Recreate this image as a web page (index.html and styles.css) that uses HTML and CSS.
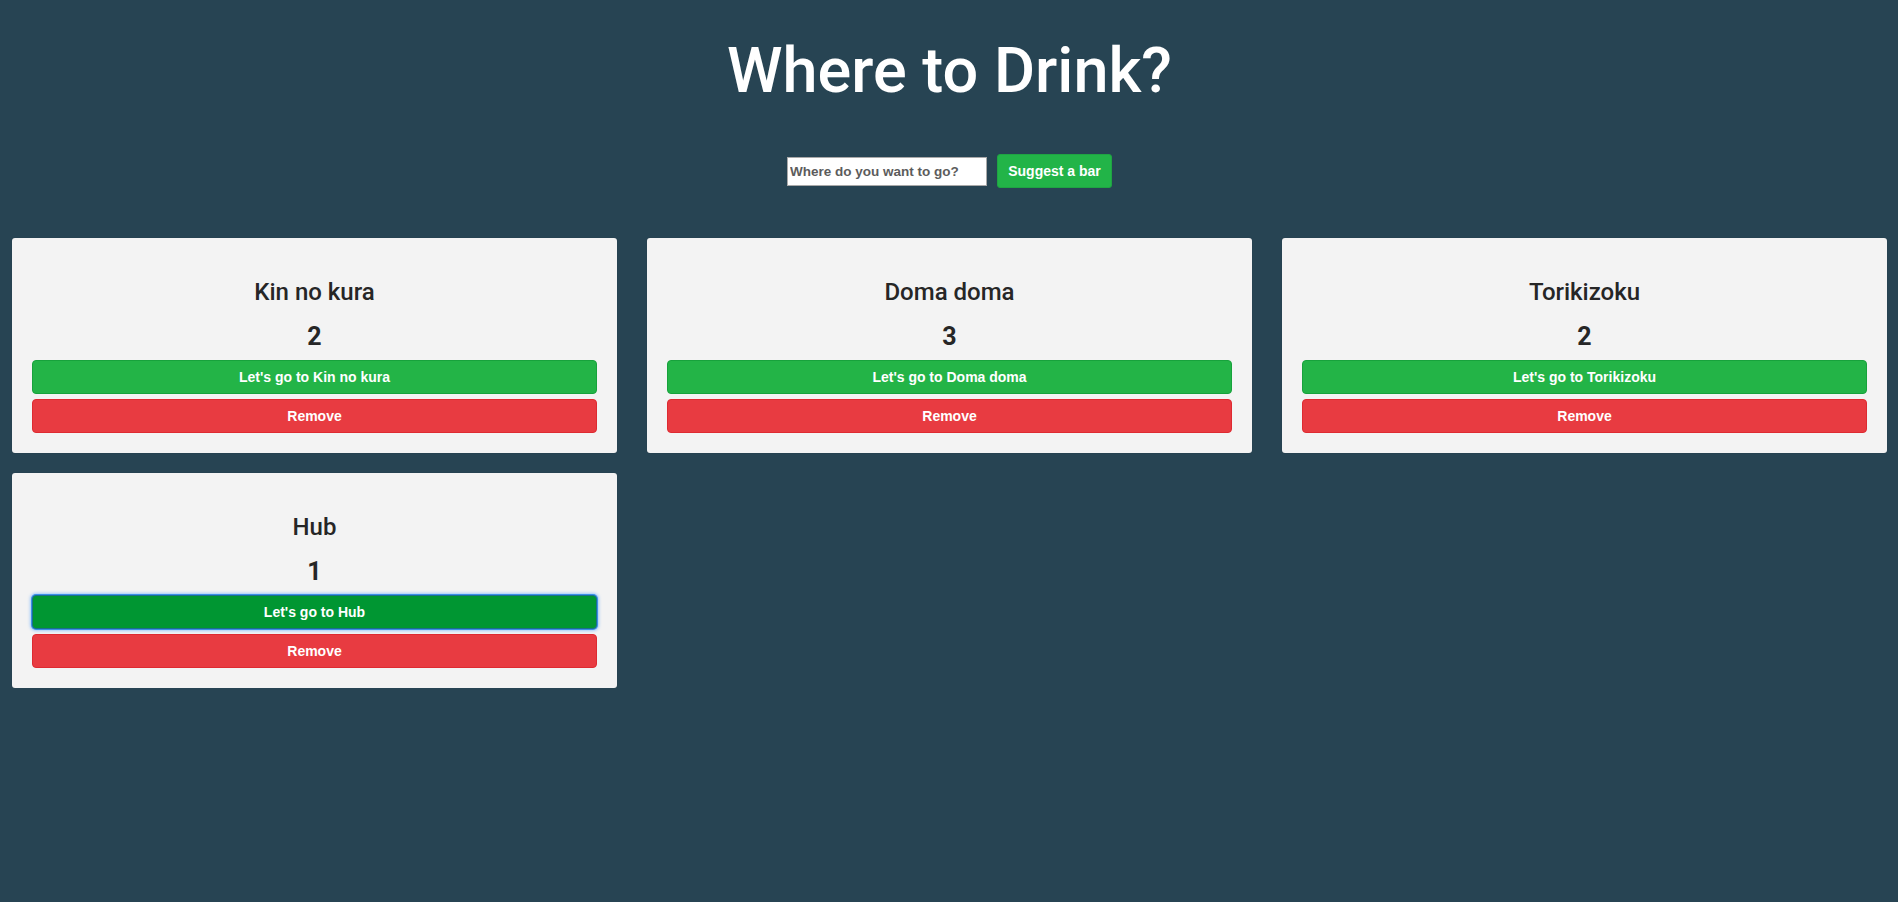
FILE: index.html
```html
<!DOCTYPE html>
<html lang="en">
<head>
<meta charset="utf-8">
<title>Where to Drink?</title>
<link rel="stylesheet" href="styles.css">
</head>
<body>
  <header class="header">
    <h1 class="title">Where to Drink?</h1>
    <form class="suggest">
      <input class="suggest-input" type="text" placeholder="Where do you want to go?">
      <button class="suggest-btn" type="button">Suggest a bar</button>
    </form>
  </header>
  <main class="grid">
    <section class="card">
      <h2 class="card-name">Kin no kura</h2>
      <div class="card-count">2</div>
      <button class="btn btn-go" type="button">Let's go to Kin no kura</button>
      <button class="btn btn-remove" type="button">Remove</button>
    </section>
    <section class="card">
      <h2 class="card-name">Doma doma</h2>
      <div class="card-count">3</div>
      <button class="btn btn-go" type="button">Let's go to Doma doma</button>
      <button class="btn btn-remove" type="button">Remove</button>
    </section>
    <section class="card">
      <h2 class="card-name">Torikizoku</h2>
      <div class="card-count">2</div>
      <button class="btn btn-go" type="button">Let's go to Torikizoku</button>
      <button class="btn btn-remove" type="button">Remove</button>
    </section>
    <section class="card">
      <h2 class="card-name">Hub</h2>
      <div class="card-count">1</div>
      <button class="btn btn-go is-focused" type="button">Let's go to Hub</button>
      <button class="btn btn-remove" type="button">Remove</button>
    </section>
  </main>
</body>
</html>
```
FILE: styles.css
```css
* { box-sizing: border-box; }

html, body {
  margin: 0;
  padding: 0;
  background: #274453;
  min-height: 100%;
}

body {
  padding: 0 11px 0 12px;
  font-family: Roboto, "Liberation Sans", Arial, sans-serif;
  color: #262626;
}

.header {
  display: flex;
  flex-direction: column;
  align-items: center;
}

.title {
  margin: 40px 0 0;
  font-size: 63px;
  line-height: 62px;
  font-weight: 500;
  color: #ffffff;
}

.suggest {
  margin-top: 52px;
  display: flex;
  align-items: center;
  gap: 10px;
  height: 34px;
}

.suggest-input {
  width: 200px;
  height: 29px;
  margin: 1px 0 0;
  padding: 0 2px;
  border: 1px solid #a9a9a9;
  background: #ffffff;
  font-family: "Liberation Sans", Arial, sans-serif;
  font-weight: 700;
  font-size: 13.5px;
  color: #555;
}

.suggest-input::placeholder {
  color: #5c5c5c;
  opacity: 1;
}

.suggest-btn {
  width: 115px;
  height: 34px;
  margin: 0;
  padding: 0;
  border: 1px solid #1fa443;
  border-radius: 3px;
  background: #22b448;
  color: #ffffff;
  font-family: "Liberation Sans", Arial, sans-serif;
  font-weight: 700;
  font-size: 14px;
}

.grid {
  margin-top: 50px;
  display: grid;
  grid-template-columns: repeat(3, 1fr);
  column-gap: 30px;
  row-gap: 20px;
}

.card {
  background: #f3f3f3;
  border-radius: 3px;
  padding: 20px 20px 20px;
  display: flex;
  flex-direction: column;
  align-items: stretch;
  text-align: center;
  box-shadow: 0 0 1px rgba(0, 0, 0, 0.25);
}

.card-name {
  margin: 20px 0 0;
  font-size: 24px;
  line-height: 28px;
  font-weight: 500;
  color: #262626;
}

.card-count {
  margin-top: 16px;
  font-size: 25px;
  line-height: 30px;
  font-weight: 700;
  color: #262626;
}

.btn {
  display: flex;
  align-items: center;
  justify-content: center;
  height: 34px;
  margin: 0;
  padding: 0;
  border-radius: 4px;
  color: #ffffff;
  font-family: "Liberation Sans", Arial, sans-serif;
  font-weight: 700;
  font-size: 14px;
}

.btn-go {
  margin-top: 8px;
  background: #23b447;
  border: 1px solid #17a23c;
}

.btn-remove {
  margin-top: 5px;
  background: #e83b41;
  border: 1px solid #de2a31;
}

.btn-go.is-focused {
  background: #009632;
  border-color: #1b6e8c;
  box-shadow: 0 0 0 1px #3b8fe8, 0 0 3px 2px rgba(90, 165, 255, 0.55);
}
```
